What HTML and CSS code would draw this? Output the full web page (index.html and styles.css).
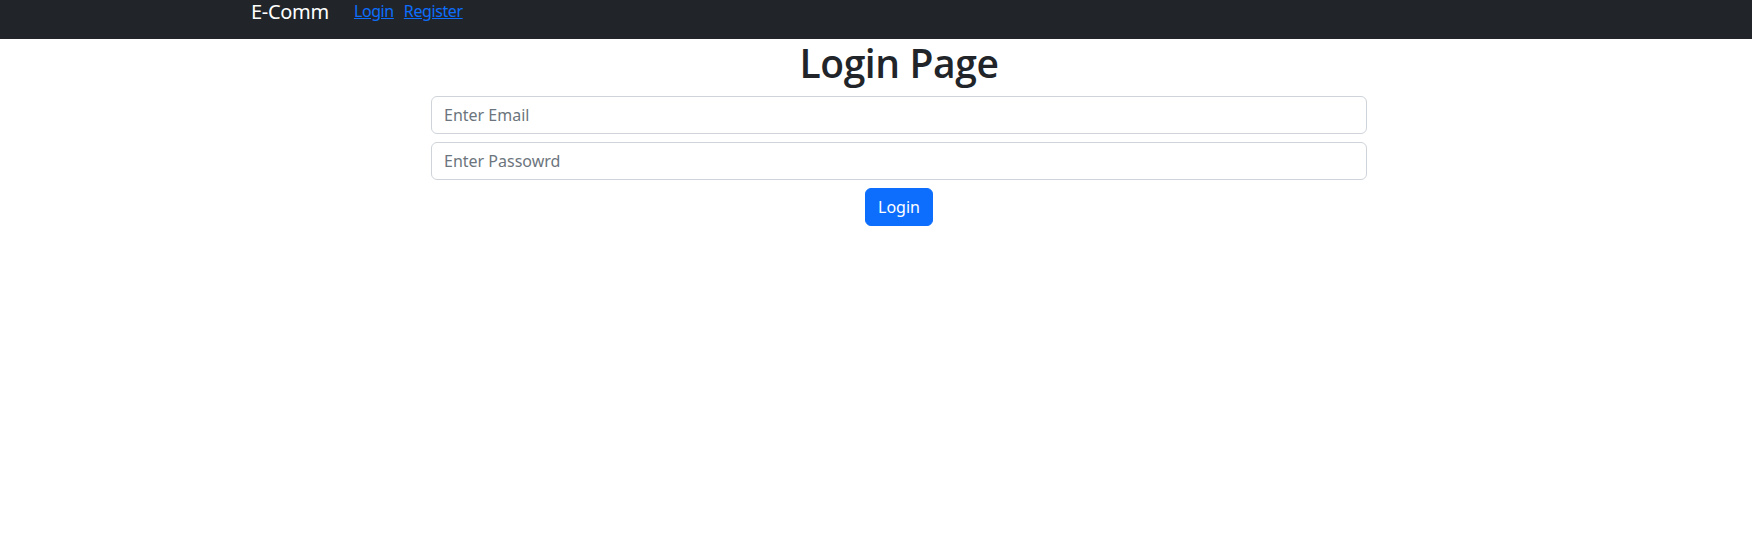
FILE: index.html
```html
<!DOCTYPE html>
<html lang="en">
<head>
<meta charset="utf-8">
<title>E-Comm</title>
<link rel="stylesheet" href="styles.css">
</head>
<body>
<nav class="navbar">
  <a class="brand" href="#">E-Comm</a>
  <ul class="nav-links">
    <li><a href="#">Login</a></li>
    <li><a href="#">Register</a></li>
  </ul>
</nav>
<main class="page">
  <div class="login">
    <h1 class="title">Login Page</h1>
    <input class="field" type="text" placeholder="Enter Email">
    <input class="field" type="password" placeholder="Enter Passowrd">
    <button class="btn" type="button">Login</button>
  </div>
</main>
</body>
</html>
```
FILE: styles.css
```css
* { box-sizing: border-box; }
html, body { margin: 0; padding: 0; }
body {
  font-family: "Noto Sans", "Open Sans", sans-serif;
  font-size: 16px;
  color: #212529;
  background: #fff;
}
.navbar {
  height: 39px;
  background: #212529;
  display: flex;
  align-items: flex-start;
  padding-left: 251px;
}
.brand {
  color: #fff;
  text-decoration: none;
  font-size: 20px;
  line-height: 24px;
  letter-spacing: -0.3px;
  margin-right: 25px;
}
.nav-links {
  list-style: none;
  margin: 0;
  padding: 0;
  display: flex;
  gap: 10px;
}
.nav-links a {
  color: #0d6efd;
  text-decoration: underline;
  font-size: 16px;
  line-height: 22px;
  letter-spacing: -0.4px;
}
.page {
  display: flex;
  justify-content: center;
  padding-left: 46px;
}
.login {
  width: 936px;
  display: flex;
  flex-direction: column;
  align-items: center;
}
.title {
  margin: 0 0 9px;
  font-family: "Open Sans", "Noto Sans", sans-serif;
  font-size: 39px;
  line-height: 48px;
  font-weight: 600;
  letter-spacing: -0.4px;
}
.field {
  width: 100%;
  height: 38px;
  padding: 6px 12px;
  border: 1px solid #ced4da;
  border-radius: 6px;
  font: inherit;
  font-size: 16px;
  color: #212529;
  margin-bottom: 8px;
}
.field::placeholder { color: #6c757d; }
.btn {
  height: 38px;
  padding: 6px 12px;
  background: #0d6efd;
  color: #fff;
  border: 1px solid #0d6efd;
  border-radius: 6px;
  font: inherit;
  font-size: 16px;
  line-height: 24px;
}
```
